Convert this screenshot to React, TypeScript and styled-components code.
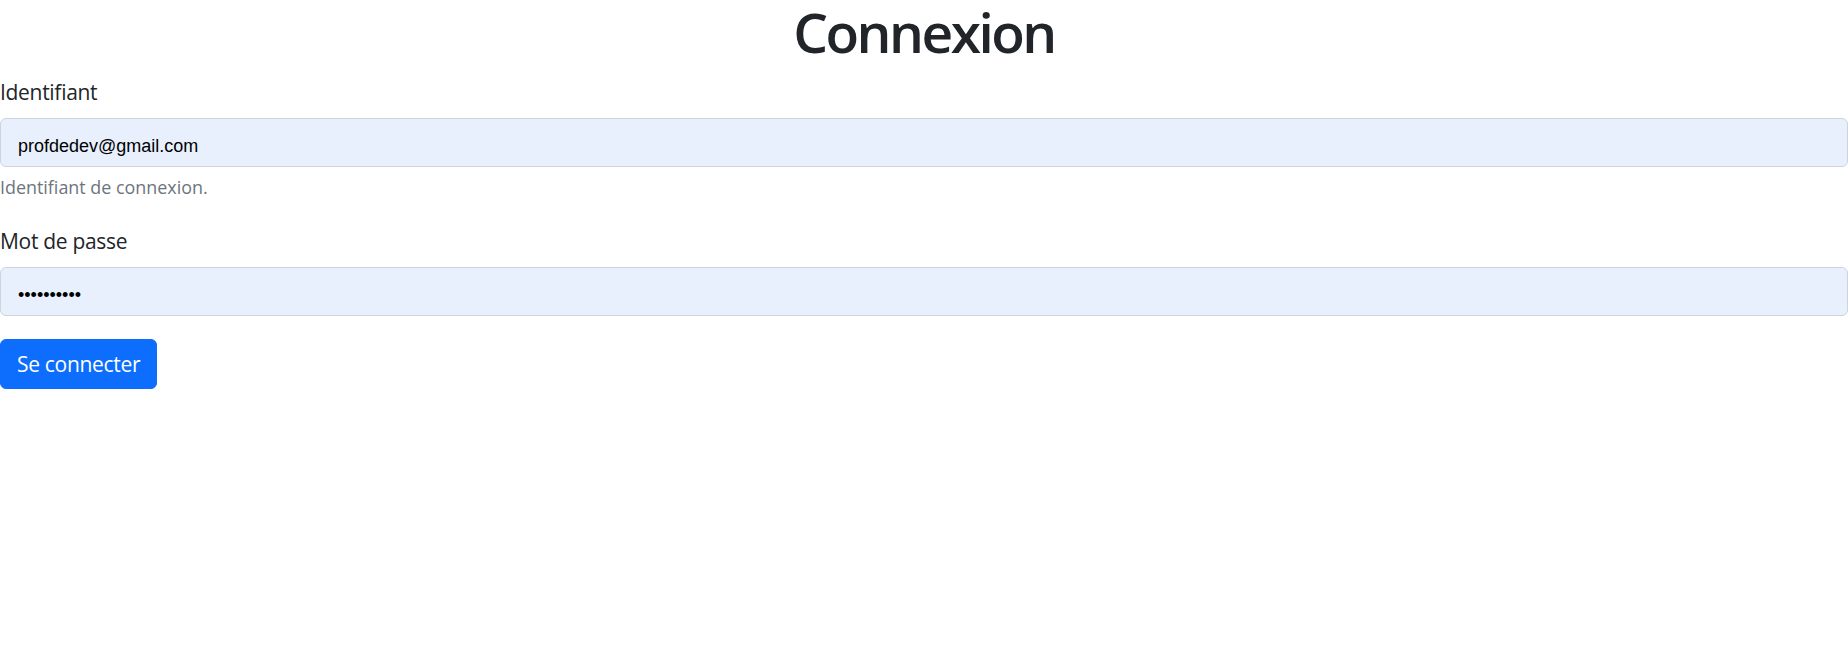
import React from "react";
import styled, { createGlobalStyle } from "styled-components";

const GlobalStyle = createGlobalStyle`
  html, body { margin: 0; padding: 0; background: #ffffff; }
  body {
    font-family: "Open Sans", "Noto Sans", "Liberation Sans", sans-serif;
    color: #212529;
    -webkit-font-smoothing: antialiased;
  }
  * { box-sizing: border-box; }
`;

const Page = styled.main`
  width: 100%;
  display: flex;
  flex-direction: column;
`;

const Title = styled.h1`
  margin: 0 0 14px;
  font-size: 55px;
  line-height: 63px;
  font-weight: 600;
  letter-spacing: -2.5px;
  text-align: center;
  color: #212529;
`;

const Form = styled.form`
  display: flex;
  flex-direction: column;
`;

const Field = styled.div<{ $gap: number }>`
  display: flex;
  flex-direction: column;
  margin-bottom: ${(p) => p.$gap}px;
`;

const Label = styled.label`
  font-size: 21px;
  letter-spacing: -0.3px;
  line-height: 30px;
  margin-bottom: 11px;
  color: #212529;
`;

const Input = styled.input`
  width: 100%;
  height: 49px;
  padding: 8px 17px 0;
  border: 1px solid #ced4da;
  border-radius: 6px;
  background: #e8f0fe;
  font-family: "Liberation Sans", Arial, sans-serif;
  font-size: 18px;
  color: #000000;
  outline: none;
`;

const Help = styled.div`
  margin-top: 6.5px;
  font-size: 17.9px;
  line-height: 26px;
  color: #6c757d;
`;

const Button = styled.button`
  align-self: flex-start;
  height: 50px;
  padding: 0 16px;
  border: 1px solid #0d6efd;
  border-radius: 6px;
  background: #0d6efd;
  color: #ffffff;
  font-family: "Open Sans", "Noto Sans", sans-serif;
  font-size: 21px;
  letter-spacing: -0.3px;
  line-height: 30px;
  cursor: pointer;
`;

export default function App() {
  return (
    <>
      <GlobalStyle />
      <Page>
        <Title>Connexion</Title>
        <Form onSubmit={(e) => e.preventDefault()}>
          <Field $gap={26.5}>
            <Label htmlFor="login">Identifiant</Label>
            <Input id="login" type="email" defaultValue="profdedev@gmail.com" />
            <Help>Identifiant de connexion.</Help>
          </Field>
          <Field $gap={23}>
            <Label htmlFor="password">Mot de passe</Label>
            <Input id="password" type="password" defaultValue="azertyuiop" />
          </Field>
          <Button type="submit">Se connecter</Button>
        </Form>
      </Page>
    </>
  );
}
